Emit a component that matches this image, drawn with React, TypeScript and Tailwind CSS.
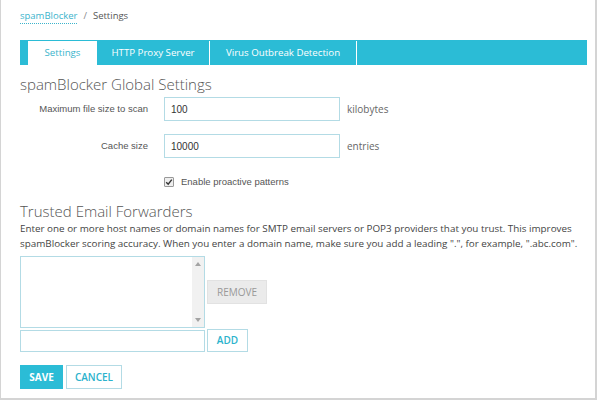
import React from "react";

export default function App() {
  const seg = { fontFamily: '"Open Sans", "Noto Sans", sans-serif' };
  const ari = { fontFamily: '"Liberation Sans", Arial, sans-serif' };
  return (
    <div className="w-[597px] h-[400px] bg-white border-l border-r-2 border-b-2 border-[#d4d4d4] box-border overflow-hidden" style={seg}>
      <div className="pl-[19px] pt-[9px] h-[40px] flex items-start text-[9.5px] text-[#555]">
        <span className="text-[#3bb4cc] border-b border-dotted border-[#3bb4cc] leading-[14px]">spamBlocker</span>
        <span className="mx-[6px] leading-[14px] text-[#888]">/</span>
        <span className="leading-[14px]">Settings</span>
      </div>
      <div className="ml-[19px] w-[567px] h-[25px] bg-[#2bbcd6] flex pl-[8px] pt-[1px] text-[9.7px] text-white">
        <div className="w-[69px] bg-white text-[#3bb4cc] flex items-center justify-center">Settings</div>
        <div className="w-[113px] flex items-center justify-center border-r border-white">HTTP Proxy Server</div>
        <div className="w-[147px] flex items-center justify-center border-r border-white">Virus Outbreak Detection</div>
      </div>
      <div className="pl-[19px] pt-[9px] text-[15px] leading-[20px] text-[#555] font-light">spamBlocker Global Settings</div>
      <div className="mt-[3px] flex items-center h-[24px]">
        <div className="w-[147px] text-right text-[9.5px] text-[#555]" style={ari}>Maximum file size to scan</div>
        <div className="ml-[16px] w-[176px] h-[24px] border border-[#b3dbe5] flex items-center pl-[6px] text-[10px] text-[#333]" style={ari}>100</div>
        <div className="ml-[7px] text-[10px] text-[#666]">kilobytes</div>
      </div>
      <div className="mt-[13px] flex items-center h-[24px]">
        <div className="w-[147px] text-right text-[9.5px] text-[#555]" style={ari}>Cache size</div>
        <div className="ml-[16px] w-[176px] h-[24px] border border-[#b3dbe5] flex items-center pl-[6px] text-[10px] text-[#333]" style={ari}>10000</div>
        <div className="ml-[7px] text-[10px] text-[#666]">entries</div>
      </div>
      <div className="mt-[19px] ml-[163px] flex items-center h-[10px]">
        <div className="w-[10px] h-[10px] border border-[#999] bg-[#eee] rounded-[1px] flex items-center justify-center">
          <svg width="8" height="8" viewBox="0 0 8 8"><path d="M1.2 4.2 L3.2 6.2 L6.8 1.6" stroke="#333" strokeWidth="1.4" fill="none" /></svg>
        </div>
        <span className="ml-[7px] text-[9.5px] text-[#555]" style={ari}>Enable proactive patterns</span>
      </div>
      <div className="pl-[19px] pt-[14px] text-[15px] leading-[20px] text-[#555] font-light">Trusted Email Forwarders</div>
      <div className="pl-[19px] pr-[6px] pt-0 text-[9.85px] leading-[15px] text-[#444]">
        Enter one or more host names or domain names for SMTP email servers or POP3 providers that you trust. This improves spamBlocker scoring accuracy. When you enter a domain name, make sure you add a leading ".", for example, ".abc.com".
      </div>
      <div className="ml-[19px] mt-[5px] flex items-center">
        <div className="w-[185px] h-[72px] border border-[#b3dbe5] flex justify-end">
          <div className="w-[12px] h-full bg-[#f1f1f1] flex flex-col items-center justify-between py-[5px]">
            <svg width="6" height="4" viewBox="0 0 6 4"><path d="M0 4 L3 0 L6 4 Z" fill="#a3a3a3" /></svg>
            <svg width="6" height="4" viewBox="0 0 6 4"><path d="M0 0 L3 4 L6 0 Z" fill="#a3a3a3" /></svg>
          </div>
        </div>
        <div className="ml-[2px] w-[60px] h-[24px] bg-[#ebebeb] border border-[#e2e2e2] flex items-center justify-center text-[10px] text-[#999]">REMOVE</div>
      </div>
      <div className="ml-[19px] mt-[1px] flex items-center">
        <div className="w-[185px] h-[22px] border border-[#b3dbe5]"></div>
        <div className="ml-[2px] w-[41px] h-[23px] border border-[#b3dbe5] flex items-center justify-center text-[10px] text-[#2bb2cc] font-semibold">ADD</div>
      </div>
      <div className="ml-[19px] mt-[13px] flex">
        <div className="w-[43px] h-[24px] bg-[#2bbcd6] flex items-center justify-center text-[10px] text-white font-bold">SAVE</div>
        <div className="ml-[3px] w-[56px] h-[24px] border border-[#b3dbe5] flex items-center justify-center text-[10px] text-[#2bb2cc] font-semibold">CANCEL</div>
      </div>
    </div>
  );
}
